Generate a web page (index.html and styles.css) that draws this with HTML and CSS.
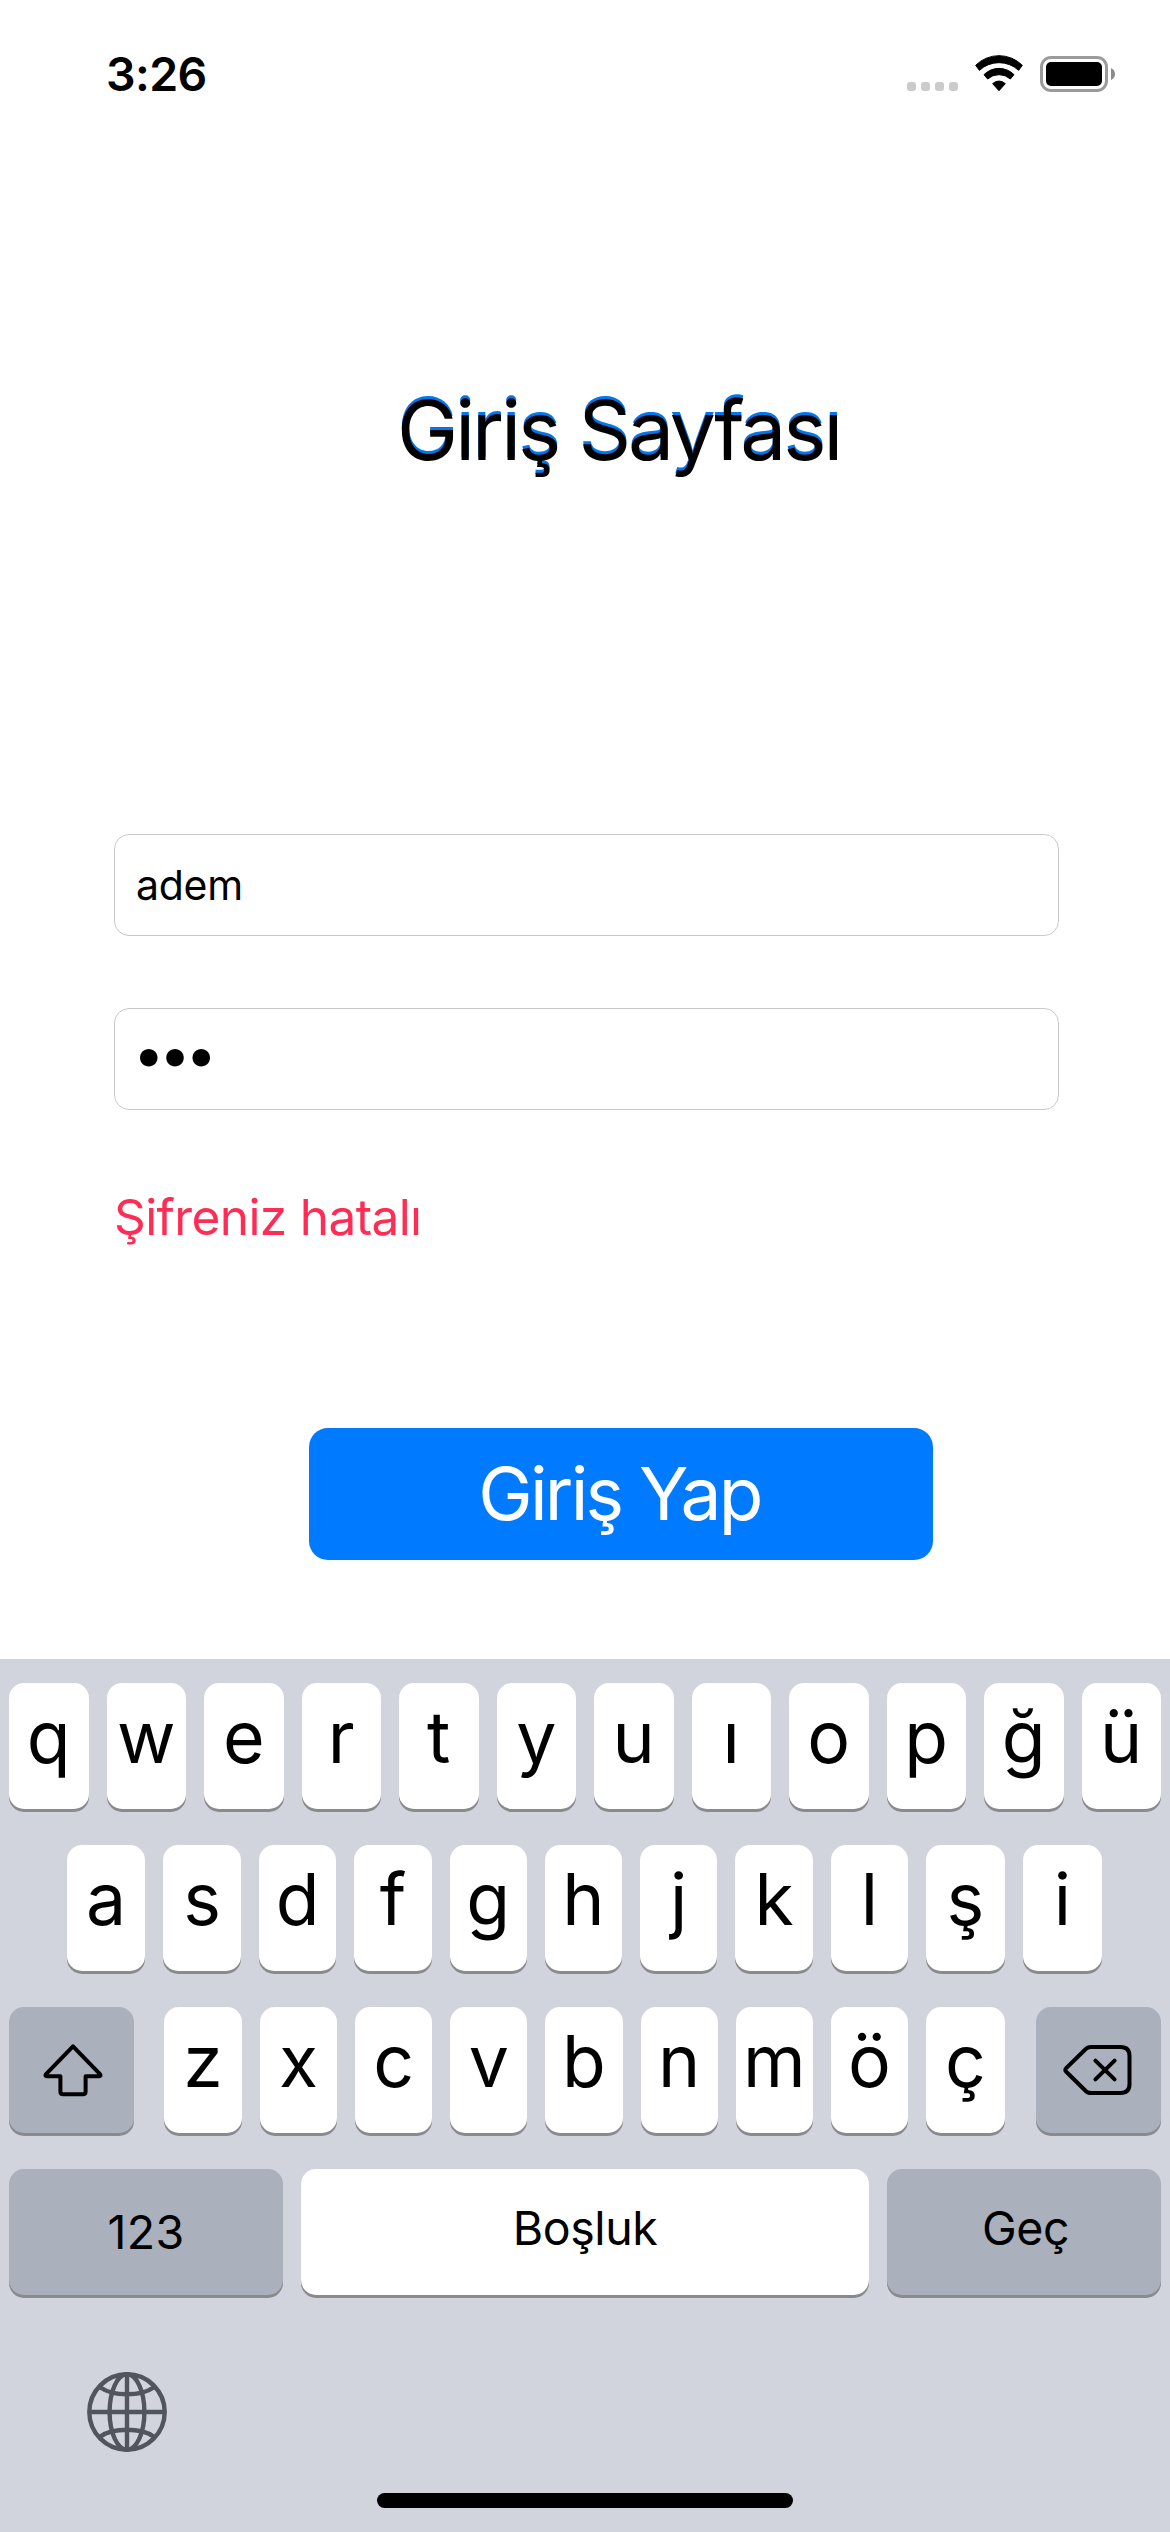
FILE: index.html
```html
<!DOCTYPE html>
<html lang="tr">
<head>
<meta charset="utf-8">
<title>Giriş Sayfası</title>
<link rel="stylesheet" href="styles.css">
</head>
<body>
<div class="screen">
  <header class="status">
    <span class="time">3:26</span>
    <div class="indicators">
      <div class="cell"><i></i><i></i><i></i><i></i></div>
      <svg class="wifi" viewBox="285 75 144 108"><path d="M287 106A99 99 0 0 1 427 106L416 121A87 87 0 0 0 298 121ZM312 134A63 63 0 0 1 402 134L391 147A51 51 0 0 0 323 147ZM338 161A27 27 0 0 1 376 161L357 182Z"/></svg>
      <div class="battery"><div class="case"><div class="charge"></div></div><svg class="nub" viewBox="0 0 4 12"><path d="M0 0Q4 2 4 6T0 12Z"/></svg></div>
    </div>
  </header>
  <main class="login">
    <h1 class="title">Giriş Sayfası</h1>
    <div class="field name">adem</div>
    <div class="field password">•••</div>
    <p class="error">Şifreniz hatalı</p>
    <button class="submit">Giriş Yap</button>
  </main>
  <section class="keyboard">
    <div class="row top">
      <div class="key">q</div><div class="key">w</div><div class="key">e</div><div class="key">r</div><div class="key">t</div><div class="key">y</div><div class="key">u</div><div class="key">ı</div><div class="key">o</div><div class="key">p</div><div class="key">ğ</div><div class="key">ü</div>
    </div>
    <div class="row home">
      <div class="key">a</div><div class="key">s</div><div class="key">d</div><div class="key">f</div><div class="key">g</div><div class="key">h</div><div class="key">j</div><div class="key">k</div><div class="key">l</div><div class="key">ş</div><div class="key">i</div>
    </div>
    <div class="row lower">
      <div class="key dark shift"><svg class="shift-icon" viewBox="0 0 60 54"><path d="M30 3.3L57 31.2Q58.4 33.2 56 33.2H42.6V48.5Q42.6 51.2 40 51.2H20Q17.4 51.2 17.4 48.5V33.2H4Q1.6 33.2 3 31.2Z"/></svg></div>
      <div class="letters">
        <div class="key">z</div><div class="key">x</div><div class="key">c</div><div class="key">v</div><div class="key">b</div><div class="key">n</div><div class="key">m</div><div class="key">ö</div><div class="key">ç</div>
      </div>
      <div class="key dark delete"><svg class="delete-icon" viewBox="0 0 69 50"><path d="M28 2H57.5Q66.5 2 66.5 11V39Q66.5 48 57.5 48H28Q24.5 48 22 45.3L3.2 26.8Q1.4 25 3.2 23.2L22 4.7Q24.5 2 28 2ZM32.4 15.6L51.6 34.4M51.6 15.6L32.4 34.4"/></svg></div>
    </div>
    <div class="row bottom">
      <div class="key dark label numbers">123</div>
      <div class="key label">Boşluk</div>
      <div class="key dark label next">Geç</div>
    </div>
    <svg class="globe" viewBox="0 0 80 80"><circle cx="40" cy="40" r="37.7"/><ellipse cx="40" cy="40" rx="17.4" ry="37.7"/><path d="M40 2V78M2 40H78M13.5 15.5C26 24.5 54 24.5 66.5 15.5M13.5 64.5C26 55.5 54 55.5 66.5 64.5"/></svg>
    <div class="home-indicator"></div>
  </section>
</div>
</body>
</html>
```

FILE: styles.css
```css
* { box-sizing: border-box; }
body { margin: 0; background: #fff; color: #000; font-family: Inter, "Liberation Sans", sans-serif; }
.screen { width: 1170px; height: 2532px; display: flex; flex-direction: column; }

.status { height: 132px; padding: 0 55px 0 106px; display: flex; justify-content: space-between; }
.time { margin-top: 46px; font-size: 46.5px; line-height: 56px; font-weight: 600; letter-spacing: -0.6px; }
.indicators { display: flex; align-items: flex-start; padding-top: 55px; }
.cell { display: flex; gap: 5px; margin: 27px 17px 0 0; }
.cell i { width: 9px; height: 9px; border-radius: 3px; background: #cbcbcb; }
.wifi { width: 48px; height: 36px; stroke: #000; stroke-width: 3; stroke-linejoin: round; }
.battery { display: flex; align-items: center; gap: 3px; margin: 1px 0 0 17px; }
.case { width: 68px; height: 36px; padding: 3px; border: 3px solid #9b9b9b; border-radius: 11px; }
.charge { height: 24px; border-radius: 5px; background: #000; }
.nub { width: 4px; height: 12px; fill: #8b8b8b; }

.login { height: 1527px; padding: 0 111px 0 114px; display: flex; flex-direction: column; }
.title { margin: 249px 0 0 283px; height: 100px; line-height: 100px; font-size: 82px; font-weight: 400; letter-spacing: -3px; color: #000; text-shadow: 0 -3px #0078ec; white-space: nowrap; }
.field { height: 102px; border: 1px solid #c9c9ca; border-radius: 15px; padding-left: 21px; line-height: 100px; font-size: 41px; letter-spacing: -0.3px; }
.name { margin-top: 353px; }
.password { margin-top: 72px; padding-left: 18px; font-size: 56px; line-height: 90px; letter-spacing: -5.2px; }
.error { margin: 76px 0 0; height: 62px; line-height: 62px; font-size: 49.5px; letter-spacing: -0.6px; color: #ff2d55; white-space: nowrap; }
.submit { margin: 180px 0 0 195px; width: 624px; height: 132px; padding: 0; border: 0; border-radius: 19px; background: #007aff; color: #fff; font: 400 73px/132px Inter, "Liberation Sans", sans-serif; letter-spacing: -2.8px; text-indent: -3px; }

.keyboard { height: 873px; padding: 24px 9px 0; background: #d1d4dc; display: flex; flex-direction: column; }
.row { height: 126px; margin-bottom: 36px; display: grid; column-gap: 18px; }
.key { display: flex; align-items: center; justify-content: center; height: 126px; padding-bottom: 18px; border-radius: 15px; background: #fff; box-shadow: 0 3px #898a8d; font-size: 71.5px; font-weight: 400; }
.dark { background: #aab0bc; }
.top { grid-template-columns: repeat(12, 1fr); }
.home { padding: 0 59px 0 58px; grid-template-columns: 78px 78px repeat(7, 1fr) 79px 79px; }
.lower { grid-template-columns: 125px 1fr 125px; column-gap: 30px; }
.letters { display: grid; padding-right: 1px; grid-template-columns: 78px repeat(7, 1fr) 79px; column-gap: 18px; }
.bottom { grid-template-columns: 274px 1fr 274px; }
.shift, .delete { padding: 0; }
.shift-icon { width: 60px; height: 54px; margin-left: 2px; fill: none; stroke: #000; stroke-width: 4; stroke-linejoin: round; }
.delete-icon { width: 69px; height: 50px; margin-right: 3px; fill: none; stroke: #000; stroke-width: 4; stroke-linecap: round; stroke-linejoin: round; }
.label { font-size: 46.5px; padding-bottom: 8px; letter-spacing: -0.4px; }
.numbers { padding-bottom: 0; letter-spacing: 0.4px; }
.next { padding-left: 3px; }
.globe { width: 80px; height: 80px; margin: 41px 0 0 78px; fill: none; stroke: #50555e; stroke-width: 4.4; }
.home-indicator { width: 416px; height: 15px; margin: 41px auto 0; border-radius: 8px; background: #000; }
```
